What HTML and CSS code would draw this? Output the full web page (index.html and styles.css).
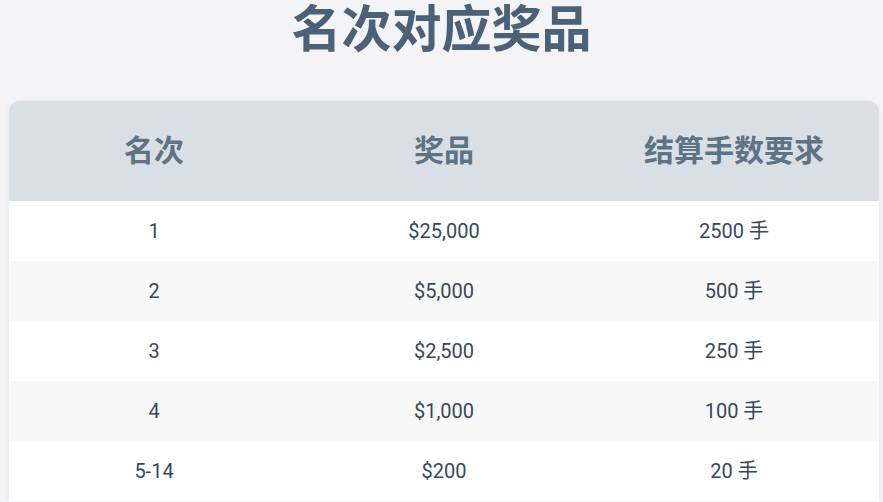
FILE: index.html
```html
<!DOCTYPE html>
<html lang="zh">
<head>
<meta charset="utf-8">
<link rel="stylesheet" href="styles.css">
</head>
<body>
<div class="page">
  <h1 class="title">名次对应奖品</h1>
  <div class="card">
    <table class="prizes">
      <thead>
        <tr><th>名次</th><th>奖品</th><th>结算手数要求</th></tr>
      </thead>
      <tbody>
        <tr><td>1</td><td>$25,000</td><td>2500 手</td></tr>
        <tr><td>2</td><td>$5,000</td><td>500 手</td></tr>
        <tr><td>3</td><td>$2,500</td><td>250 手</td></tr>
        <tr><td>4</td><td>$1,000</td><td>100 手</td></tr>
        <tr><td>5-14</td><td>$200</td><td>20 手</td></tr>
      </tbody>
    </table>
  </div>
</div>
</body>
</html>
```
FILE: styles.css
```css
html, body {
  margin: 0;
  padding: 0;
  background: #f4f4f7;
  font-family: Roboto, "Noto Sans CJK SC", sans-serif;
}
.page {
  width: 883px;
  overflow: hidden;
}
.title {
  margin: 0;
  padding-top: 0;
  height: 101px;
  line-height: 60px;
  font-size: 50px;
  font-weight: 700;
  color: #4a6177;
  text-align: center;
  box-sizing: border-box;
}
.card {
  margin-left: 9px;
  width: 870px;
  background: #fff;
  border-radius: 10px 10px 0 0;
  overflow: hidden;
  box-shadow: 0 1px 4px rgba(0,0,0,0.08);
}
.prizes {
  width: 100%;
  border-collapse: collapse;
  table-layout: fixed;
}
.prizes th {
  height: 100px;
  background: #dadfe5;
  color: #5d7386;
  font-size: 30px;
  line-height: 30px;
  font-weight: 700;
  text-align: center;
  padding: 0;
}
.prizes td {
  height: 60px;
  padding: 0;
  text-align: center;
  font-size: 20px;
  line-height: 20px;
  color: #34495e;
}
.prizes tbody tr:nth-child(even) td {
  background: #f8f8f9;
}
```
